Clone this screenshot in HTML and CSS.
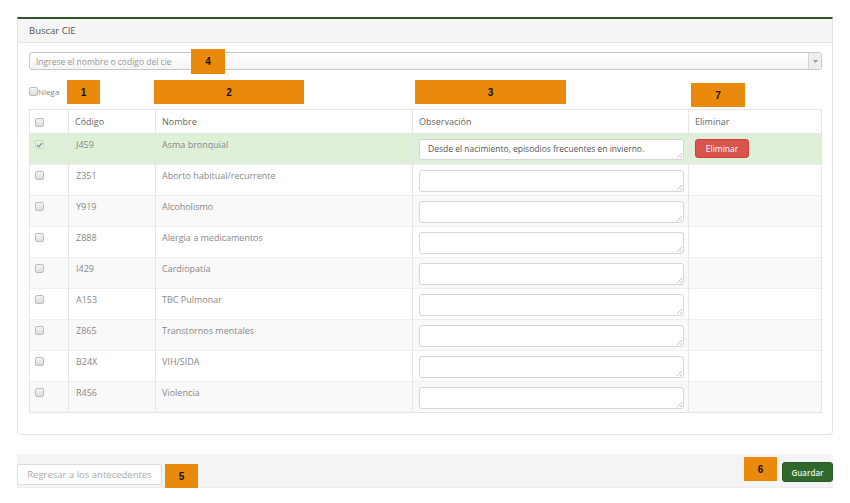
FILE: index.html
```html
<!DOCTYPE html>
<html lang="es">
<head>
<meta charset="utf-8">
<title>Buscar CIE</title>
<link rel="stylesheet" href="styles.css">
</head>
<body>
<div class="page">
  <div class="panel">
    <div class="panel-heading">Buscar CIE</div>
    <div class="panel-body">
      <div class="select-wrap">
        <div class="select">
          <span class="placeholder">Ingrese el nombre o codigo del cie</span>
          <span class="arrow"><svg width="5" height="3" viewBox="0 0 5 3"><path d="M0 0h5L2.5 3z" fill="#999"/></svg></span>
        </div>
        <span class="badge badge-4">4</span>
      </div>
      <div class="niega-row">
        <label class="niega"><span class="cb"></span>Niega</label>
        <span class="badge b1">1</span>
        <span class="badge b2">2</span>
        <span class="badge b3">3</span>
        <span class="badge b7">7</span>
      </div>
      <table class="grid">
        <colgroup>
          <col class="c-cb"><col class="c-cod"><col class="c-nom"><col class="c-obs"><col class="c-eli">
        </colgroup>
        <thead>
          <tr><th><span class="cb"></span></th><th>Código</th><th>Nombre</th><th>Observación</th><th>Eliminar</th></tr>
        </thead>
        <tbody>
          <tr class="success">
            <td><span class="cb checked"><svg width="7" height="6" viewBox="0 0 7 6"><path d="M1 3l1.8 1.8L6 1" fill="none" stroke="#8a8a8a" stroke-width="1.2"/></svg></span></td>
            <td>J459</td><td>Asma bronquial</td>
            <td><textarea class="obs filled">Desde el nacimiento, episodios frecuentes en invierno.</textarea></td>
            <td><button class="btn-danger">Eliminar</button></td>
          </tr>
          <tr><td><span class="cb"></span></td><td>Z351</td><td>Aborto habitual/recurrente</td><td><textarea class="obs"></textarea></td><td></td></tr>
          <tr><td><span class="cb"></span></td><td>Y919</td><td>Alcoholismo</td><td><textarea class="obs"></textarea></td><td></td></tr>
          <tr><td><span class="cb"></span></td><td>Z888</td><td>Alergia a medicamentos</td><td><textarea class="obs"></textarea></td><td></td></tr>
          <tr><td><span class="cb"></span></td><td>I429</td><td>Cardiopatía</td><td><textarea class="obs"></textarea></td><td></td></tr>
          <tr><td><span class="cb"></span></td><td>A153</td><td>TBC Pulmonar</td><td><textarea class="obs"></textarea></td><td></td></tr>
          <tr><td><span class="cb"></span></td><td>Z865</td><td>Transtornos mentales</td><td><textarea class="obs"></textarea></td><td></td></tr>
          <tr><td><span class="cb"></span></td><td>B24X</td><td>VIH/SIDA</td><td><textarea class="obs"></textarea></td><td></td></tr>
          <tr><td><span class="cb"></span></td><td>R456</td><td>Violencia</td><td><textarea class="obs"></textarea></td><td></td></tr>
        </tbody>
      </table>
    </div>
  </div>
  <div class="footer">
    <button class="btn-default">Regresar a los antecedentes</button>
    <span class="badge b5">5</span>
    <span class="spacer"></span>
    <span class="badge b6">6</span>
    <button class="btn-success">Guardar</button>
  </div>
</div>
</body>
</html>
```
FILE: styles.css
```css
* { box-sizing: border-box; }
body {
  margin: 0;
  background: #fff;
  font-family: "Open Sans", "Liberation Sans", sans-serif;
  font-size: 9px;
  color: #777;
}
.page {
  width: 850px;
  padding: 17px 17px 0 17px;
}
.panel {
  width: 816px;
  border: 1px solid #e3e3e3;
  border-top: 2px solid #2f5229;
  border-radius: 0 0 4px 4px;
}
.panel-heading {
  height: 24px;
  line-height: 24px;
  padding: 0 11px;
  background: #f5f5f5;
  border-bottom: 1px solid #e3e3e3;
  color: #555;
  font-size: 9.5px;
}
.panel-body {
  padding: 9px 10px 21px 11px;
}
.select-wrap {
  position: relative;
}
.select {
  height: 18px;
  border: 1px solid #c8c8c8;
  border-radius: 3px;
  background: linear-gradient(#fff, #f4f4f4);
  display: flex;
  align-items: center;
  padding-left: 6px;
}
.placeholder {
  flex: 1;
  color: #9a9a9a;
  font-size: 8.5px;
}
.arrow {
  width: 13px;
  height: 16px;
  border-left: 1px solid #d5d5d5;
  background: #eee;
  display: flex;
  align-items: center;
  justify-content: center;
  border-radius: 0 2px 2px 0;
}
.badge {
  display: flex;
  align-items: center;
  justify-content: center;
  height: 24px;
  background: #e98a0c;
  color: #111;
  font-family: "Liberation Sans", Arial, sans-serif;
  font-weight: bold;
  font-size: 10px;
}
.badge-4 {
  position: absolute;
  left: 162px;
  top: -3px;
  width: 34px;
  height: 25px;
}
.niega-row {
  display: flex;
  align-items: flex-start;
  height: 39px;
  padding-top: 10px;
}
.niega {
  display: flex;
  align-items: center;
  height: 24px;
  margin-top: -1px;
  font-size: 8px;
  color: #888;
  width: 33px;
  white-space: nowrap;
}
.niega .cb { margin: 0; }
.b1 { margin-left: 5px; width: 33px; }
.b2 { margin-left: 54px; width: 150px; }
.b3 { margin-left: 111px; width: 151px; }
.b7 { margin-left: 125px; width: 54px; margin-top: 3px; }
.cb {
  display: inline-flex;
  align-items: center;
  justify-content: center;
  width: 9px;
  height: 9px;
  border: 1px solid #bcbcbc;
  border-radius: 2px;
  background: linear-gradient(#f6f6f6, #dcdcdc);
  vertical-align: top;
  flex: none;
}
.cb.checked {
  background: #e8f2e4;
  border-color: #c6d6c2;
}
.grid {
  width: 792px;
  border-collapse: collapse;
  table-layout: fixed;
  border: 1px solid #e2e2e2;
}
.c-cb { width: 39px; }
.c-cod { width: 87px; }
.c-nom { width: 257px; }
.c-obs { width: 276px; }
.c-eli { width: 133px; }
.grid th {
  height: 24px;
  text-align: left;
  font-weight: normal;
  color: #666;
  font-size: 9px;
  padding: 0 6px;
  border: 1px solid #e6e6e6;
  vertical-align: middle;
}
.grid th:first-child { padding-left: 5px; }
.grid th .cb { vertical-align: middle; }
.grid td {
  height: 31px;
  padding: 4px 6px 0;
  border-left: 1px solid #e6e6e6;
  border-right: 1px solid #e6e6e6;
  border-top: 1px solid #eeeeee;
  vertical-align: top;
  color: #888;
}
.grid td:first-child { padding-left: 5px; padding-top: 6px; }
.grid td:nth-child(2) { padding-left: 7px; }
.grid td:nth-child(4) { padding-top: 5px; }
.grid td:nth-child(5) { padding-top: 5px; }
.grid tbody tr:nth-child(odd) td { background: #f9f9f9; }
.grid tbody tr.success td { background: #dff0d8; }
.obs {
  display: block;
  width: 265px;
  height: 22px;
  margin: 0;
  border: 1px solid #d6d6d6;
  border-radius: 3px;
  background: #fff linear-gradient(135deg, transparent 0 55%, #c4c4c4 55% 63%, transparent 63% 78%, #c4c4c4 78% 86%, transparent 86%) no-repeat right 1px bottom 1px / 6px 6px;
  font-family: "Open Sans", "Liberation Sans", sans-serif;
  font-size: 8.5px;
  color: #555;
  padding: 4px 8px;
  resize: none;
  overflow: hidden;
}
.obs.filled { height: 21px; padding: 3px 8px; }
.btn-danger {
  width: 54px;
  height: 19px;
  border: 1px solid #d43f3a;
  border-radius: 3px;
  background: #d9534f;
  color: #fff;
  font-family: "Open Sans", "Liberation Sans", sans-serif;
  font-size: 8.5px;
  padding: 0;
}
.footer {
  width: 816px;
  margin-top: 19px;
  height: 34px;
  background: #f4f4f4;
  border-bottom: 1px solid #ececec;
  display: flex;
  align-items: flex-start;
}
.btn-default {
  margin-top: 10px;
  width: 145px;
  height: 21px;
  background: #fff;
  border: 1px solid #dddddd;
  border-radius: 2px;
  color: #aaa;
  font-family: "Open Sans", "Liberation Sans", sans-serif;
  font-size: 9.5px;
  padding: 0;
}
.b5 { margin-top: 10px; margin-left: 3px; width: 33px; }
.spacer { flex: 1; }
.b6 { margin-top: 3px; width: 33px; }
.btn-success {
  margin-top: 8px;
  margin-left: 5px;
  width: 51px;
  height: 20px;
  background: #2f6a2c;
  border: 1px solid #285a25;
  border-radius: 3px;
  color: #e8f0e6;
  font-family: "Open Sans", "Liberation Sans", sans-serif;
  font-size: 8px;
  font-weight: 600;
  padding: 0;
}
```
